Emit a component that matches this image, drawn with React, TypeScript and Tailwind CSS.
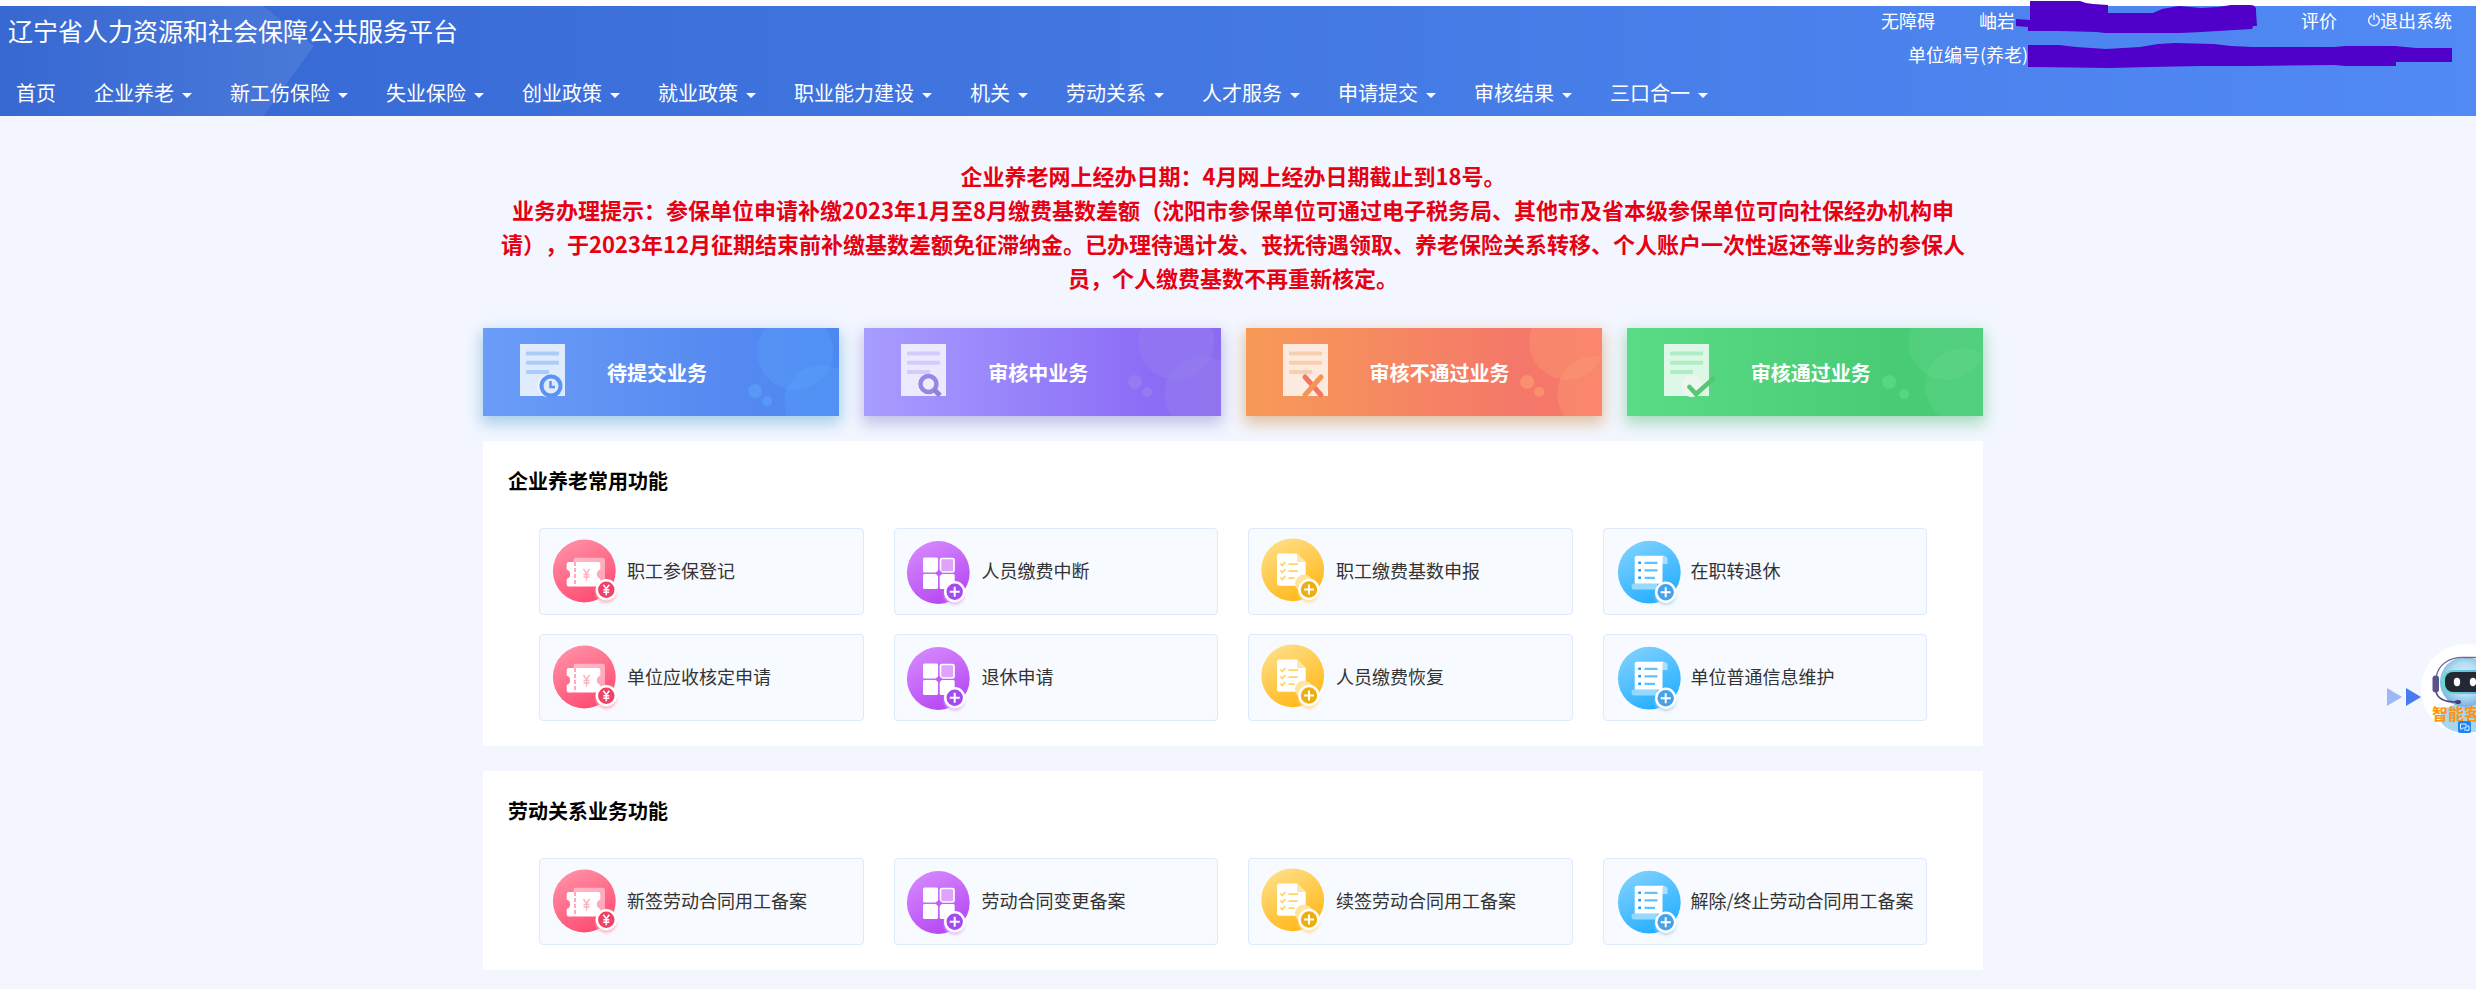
import type { ReactNode } from 'react';

type TileKind = 'ticket' | 'grid' | 'checklist' | 'scroll';
type StatusKind = 'clock' | 'search' | 'reject' | 'pass';

interface Tile {
  label: string;
  kind: TileKind;
}

const NAV_ITEMS = [
  '企业养老',
  '新工伤保险',
  '失业保险',
  '创业政策',
  '就业政策',
  '职业能力建设',
  '机关',
  '劳动关系',
  '人才服务',
  '申请提交',
  '审核结果',
  '三口合一',
];

const STATUS_CARDS = [
  {
    label: '待提交业务',
    kind: 'clock' as StatusKind,
    className: 'bg-linear-to-r from-[#6b9cf8] via-[#5589f0] via-70% to-[#4d88f2] shadow-[0_6px_14px_2px_#a9cfea]',
    line: '#a9cdf8',
    bubble: '#5aa4fa',
    bubbles: [[312, 24, 38], [339, 75, 38], [272, 63, 7], [284, 73, 5]],
  },
  {
    label: '审核中业务',
    kind: 'search' as StatusKind,
    className: 'bg-linear-to-r from-[#a79cff] via-[#8c6cf6] via-80% to-[#8a6cf0] shadow-[0_6px_14px_2px_#c2c0e8]',
    line: '#d3ccfa',
    bubble: '#9a84ee',
    bubbles: [[312, 14, 38], [338, 66, 38], [271, 54, 7], [283, 64, 5]],
  },
  {
    label: '审核不通过业务',
    kind: 'reject' as StatusKind,
    className: 'bg-linear-to-r from-[#f79a57] via-[#f47869] via-75% to-[#f8786c] shadow-[0_6px_14px_2px_#e0c3a6]',
    line: '#f6d0ae',
    bubble: '#fca072',
    bubbles: [[321, 14, 38], [349, 66, 38], [281, 54, 7], [293, 64, 5]],
  },
  {
    label: '审核通过业务',
    kind: 'pass' as StatusKind,
    className: 'bg-linear-to-r from-[#5adc86] via-[#48cb74] via-75% to-[#48cc76] shadow-[0_6px_14px_2px_#a9dcc0]',
    line: '#aeeec4',
    bubble: '#66d890',
    bubbles: [[319, 14, 38], [336, 58, 38], [262, 54, 7], [277, 66, 5]],
  },
];

const PENSION_TILES: Tile[] = [
  { label: '职工参保登记', kind: 'ticket' },
  { label: '人员缴费中断', kind: 'grid' },
  { label: '职工缴费基数申报', kind: 'checklist' },
  { label: '在职转退休', kind: 'scroll' },
  { label: '单位应收核定申请', kind: 'ticket' },
  { label: '退休申请', kind: 'grid' },
  { label: '人员缴费恢复', kind: 'checklist' },
  { label: '单位普通信息维护', kind: 'scroll' },
];

const LABOR_TILES: Tile[] = [
  { label: '新签劳动合同用工备案', kind: 'ticket' },
  { label: '劳动合同变更备案', kind: 'grid' },
  { label: '续签劳动合同用工备案', kind: 'checklist' },
  { label: '解除/终止劳动合同用工备案', kind: 'scroll' },
];

/** Gradients used by all tile icons, defined once for the page */
function IconDefs() {
  return (
    <svg className="absolute size-0" aria-hidden="true">
      <defs>
        <linearGradient id="g-ticket" x1="0.2" y1="0" x2="0.7" y2="1">
          <stop offset="0" stopColor="#ff91a6" />
          <stop offset="1" stopColor="#ff4a70" />
        </linearGradient>
        <linearGradient id="g-grid" x1="0.2" y1="0" x2="0.7" y2="1">
          <stop offset="0" stopColor="#d68aff" />
          <stop offset="1" stopColor="#b545f2" />
        </linearGradient>
        <linearGradient id="g-checklist" x1="0.2" y1="0" x2="0.7" y2="1">
          <stop offset="0" stopColor="#ffdf88" />
          <stop offset="1" stopColor="#ffb716" />
        </linearGradient>
        <linearGradient id="g-scroll" x1="0.2" y1="0" x2="0.7" y2="1">
          <stop offset="0" stopColor="#80d2ff" />
          <stop offset="1" stopColor="#22adff" />
        </linearGradient>
        <filter id="badge-blur" x="-50%" y="-50%" width="200%" height="200%">
          <feGaussianBlur stdDeviation="1.5" />
        </filter>
      </defs>
    </svg>
  );
}

interface BadgeProps {
  x: number;
  y: number;
  fill: string;
  shadow: string;
  yen?: boolean;
}

function Badge({ x, y, fill, shadow, yen }: BadgeProps) {
  return (
    <g transform={`translate(${x} ${y})`}>
      <circle cy="3" r="10" fill={shadow} filter="url(#badge-blur)" />
      <circle r="10.7" fill="#fff" />
      <circle r="8.2" fill={fill} />
      {yen ? (
        <path d="M-3 -5 0 -1 3 -5M0 -1V5.500M-3 0H3M-3 2.500H3" fill="none" stroke="#fff" strokeWidth="1.5" />
      ) : (
        <path d="M-5 0H5M0 -5V5" stroke="#fff" strokeWidth="2" />
      )}
    </g>
  );
}

function TileIcon({ kind }: { kind: TileKind }) {
  const drawings: Record<TileKind, ReactNode> = {
    ticket: (
      <>
        <circle cx="35.3" cy="35" r="31.400" fill="url(#g-ticket)" />
        <rect x="24.500" y="21.800" width="31.500" height="25" rx="2" fill="#fff" opacity="0.450" />
        <path
          d="M19.700 26H49.300a2 2 0 0 1 2 2v5.500a5 5 0 0 0 0 9.500v5.500a2 2 0 0 1-2 2H19.700a2 2 0 0 1-2-2V43a5 5 0 0 0 0-9.500V28a2 2 0 0 1 2-2Z"
          fill="#fff"
        />
        <path d="M26 26V50.500" stroke="#ff8da2" strokeWidth="1.500" strokeDasharray="4 2" />
        <path d="M34.500 33 37.500 37.500 40.500 33M37.500 37.500V44.500M34.500 38.500H40.500M34.500 41H40.500" fill="none" stroke="#ffb0bd" strokeWidth="1.400" />
        <Badge x={57.3} y={53.8} fill="#ee4266" shadow="#ffb0be" yen />
      </>
    ),
    grid: (
      <>
        <circle cx="34.300" cy="36.500" r="31.400" fill="url(#g-grid)" />
        <rect x="19" y="21.500" width="15" height="15" rx="1.500" fill="#fff" />
        <rect x="36.500" y="22.500" width="13.500" height="13.500" rx="1.500" fill="#dea4fb" stroke="#fff" strokeWidth="1.700" />
        <rect x="19" y="38" width="15" height="15" rx="1.500" fill="#fff" />
        <rect x="35.700" y="38" width="15" height="15" rx="1.500" fill="#fff" />
        <path d="M34.900 33.500 38.500 37.200 34.900 41 31.200 37.200Z" fill="#c25cf7" />
        <Badge x={50.7} y={55.8} fill="#a44af0" shadow="#e3bdfb" />
      </>
    ),
    checklist: (
      <>
        <circle cx="34.700" cy="33.800" r="31.400" fill="url(#g-checklist)" />
        <path d="M21 17.500H39L47.700 26V49.800H21a2 2 0 0 1-2-2V19.500a2 2 0 0 1 2-2Z" fill="#fff" />
        <path d="M39 17.500 47.700 26H39Z" fill="#ffe6a6" />
        <circle cx="46" cy="47.500" r="9" fill="#ffe49d" />
        <path
          d="M22.500 27.500 24.200 29.500 27.500 26M22.500 34.500 24.200 36.500 27.500 33M22.500 41.500 24.200 43.500 27.500 40M30.500 28.200H40M30.500 35.200H40M30.500 42.200H36.500"
          fill="none"
          stroke="#ffd466"
          strokeWidth="1.800"
        />
        <Badge x={51} y={53.5} fill="#edae14" shadow="#ffe09a" />
      </>
    ),
    scroll: (
      <>
        <circle cx="36.300" cy="36.200" r="31.400" fill="url(#g-scroll)" />
        <path d="M46 20.300H51.500a3 3 0 0 1 3 3V28H48Z" fill="#a9e0ff" />
        <path d="M23.700 19.800H51.500a2.500 2.500 0 0 0-2 2.500V47.800H21.700V21.800a2 2 0 0 1 2-2Z" fill="#fff" />
        <path d="M18.700 47.800H44V53.500H21a2.300 2.300 0 0 1-2.300-2.300Z" fill="#96d9ff" />
        <path d="M25.200 26.800H28M25.200 34.300H28M25.200 41.800H28" stroke="#1f9ff5" strokeWidth="2.600" />
        <path d="M31.500 26.800H44.500M31.500 34.300H44.500M31.500 41.800H42" stroke="#5fc3ff" strokeWidth="2.200" />
        <Badge x={52.7} y={56.2} fill="#45a2ea" shadow="#b7d8ef" />
      </>
    ),
  };

  return (
    <svg viewBox="0 0 72 72" className="size-[72px] shrink-0" aria-hidden="true">
      {drawings[kind]}
    </svg>
  );
}

function StatusIcon({ kind, line }: { kind: StatusKind; line: string }) {
  return (
    <svg viewBox="0 0 52 56" className="h-14 w-[52px] shrink-0" aria-hidden="true">
      <rect x="1" y="0" width="45" height="52" fill="#fff" opacity="0.800" />
      <rect x="7" y="7.500" width="33" height="4" rx="1" fill={line} />
      <rect x="7" y="16.800" width="33" height="4" rx="1" fill={line} />
      <rect x="7" y="26" width="23" height="4" rx="1" fill={line} />
      {kind === 'clock' && (
        <>
          <circle cx="29" cy="42" r="11" fill="#f0f2f6" />
          <circle cx="32" cy="42" r="9.500" fill="#dfeafc" stroke="#5b93f5" strokeWidth="4" />
          <path d="M31.500 37V43H36" fill="none" stroke="#5b93f5" strokeWidth="2.500" />
        </>
      )}
      {kind === 'search' && (
        <>
          <circle cx="27" cy="42" r="9" fill="#f3f1fb" />
          <circle cx="28.500" cy="40" r="8" fill="#efeafd" stroke="#9488e4" strokeWidth="4.500" />
          <path d="M34 45.500 40 51.500" stroke="#8d80dc" strokeWidth="5" />
        </>
      )}
      {kind === 'reject' && (
        <>
          <circle cx="27" cy="42" r="9" fill="#fbeee9" />
          <path d="M23 33 39 51" stroke="#f5765e" strokeWidth="5" strokeLinecap="round" />
          <path d="M39 33 23 51" stroke="#f69455" strokeWidth="5" strokeLinecap="round" />
        </>
      )}
      {kind === 'pass' && (
        <>
          <circle cx="29" cy="42" r="11" fill="#ecf6ef" />
          <path d="M26.500 43 33 50 50 35" fill="none" stroke="#56c673" strokeWidth="4.500" strokeLinecap="round" />
        </>
      )}
    </svg>
  );
}

function Header() {
  return (
    <header className="relative mt-[6px] bg-linear-to-r from-[#3567d1] to-[#528af5] pb-[2px] text-white">
      <svg
        viewBox="0 0 314 110"
        preserveAspectRatio="none"
        className="absolute inset-y-0 left-0 h-full w-[314px]"
        aria-hidden="true"
      >
        <defs>
          <linearGradient id="g-facet" x1="0" y1="0" x2="1" y2="0">
            <stop offset="0" stopColor="#fff" stopOpacity="0.010" />
            <stop offset="1" stopColor="#fff" stopOpacity="0.090" />
          </linearGradient>
        </defs>
        <path d="M0 0H263L314 40 263 110H0Z" fill="url(#g-facet)" />
      </svg>

      <div className="relative flex items-start justify-between pr-6 pl-2">
        <h1 className="pt-[6px] text-[25px] leading-9">辽宁省人力资源和社会保障公共服务平台</h1>

        <div className="flex flex-col items-end gap-[6px] text-[18px] leading-7">
          <div className="flex items-center">
            <a href="#accessible">无障碍</a>
            <span className="ml-11 w-[278px]">岫岩</span>
            <a href="#rate" className="ml-11">评价</a>
            <button type="button" className="ml-[31px] flex items-center">
              <svg viewBox="0 0 12 16" className="h-4 w-3" fill="none" stroke="currentColor" strokeWidth="1.500" opacity="0.850">
                <path d="M4 3.500a5.300 5.300 0 1 0 4 0M6 1V8" />
              </svg>
              退出系统
            </button>
          </div>
          <div className="w-[544px]">单位编号(养老)</div>
        </div>

        {/* Hand-drawn cover over the account details */}
        <svg viewBox="2010 0 446 72" className="absolute -top-[6px] right-5 h-[72px] w-[446px]" fill="#5000c8" aria-hidden="true">
          <path d="M2030 1 2080 1 2086 3 2093 4 2108 5V13H2153L2162 9 2179 6 2201 8 2218 7 2231 5H2250Q2257 5 2256 12L2257 26H2253L2252 29 2201 32 2180 33H2105L2097 32 2059 31H2028V27L2016 26V19L2030 20Z" />
          <path d="M2028 45H2059L2076 47 2106 49 2140 47 2158 44 2175 43 2214 44 2231 46 2253 47H2334L2345 46H2395L2416 48H2452V62H2396V66H2345L2334 65 2253 66 2201 66 2150 67 2110 68 2028 67Z" />
        </svg>
      </div>

      <nav className="relative mt-1 flex h-[42px] items-center gap-[38px] pl-4 text-[20px] whitespace-nowrap">
        <a href="#home">首页</a>
        {NAV_ITEMS.map((item) => (
          <button key={item} type="button" className="flex items-center gap-2">
            {item}
            <span className="mt-1 border-x-5 border-t-5 border-x-transparent border-t-white" />
          </button>
        ))}
      </nav>
    </header>
  );
}

function Panel({ title, tiles }: { title: string; tiles: Tile[] }) {
  return (
    <section className="mt-[25px] bg-white py-[25px]">
      <h2 className="px-[25px] text-[20px] leading-[30px] font-bold text-black">{title}</h2>
      <div className="mt-8 grid grid-cols-4 gap-x-[30px] gap-y-[19px] px-14">
        {tiles.map((tile) => (
          <a
            key={tile.label}
            href="#service"
            className="flex h-[87px] items-center gap-[6px] rounded border border-[#dde9fd] bg-[#f7faff] pl-[9px] text-[18px] whitespace-nowrap text-[#333]"
          >
            <TileIcon kind={tile.kind} />
            <span className="pb-[2px]">{tile.label}</span>
          </a>
        ))}
      </div>
    </section>
  );
}

/** Floating customer service robot at the right edge */
function ServiceRobot() {
  return (
    <button
      type="button"
      aria-label="智能客服"
      className="absolute top-[640px] right-0 h-[96px] w-[92px] overflow-hidden"
    >
      <svg viewBox="0 0 92 96" className="absolute inset-0 h-[96px] w-[92px]" aria-hidden="true">
        <defs>
          <radialGradient id="g-head" cx="0.5" cy="0.45" r="0.55">
            <stop offset="0" stopColor="#e4f4fd" />
            <stop offset="0.600" stopColor="#b4dcf3" />
            <stop offset="1" stopColor="#78b0de" />
          </radialGradient>
          <linearGradient id="g-visor" x1="0" y1="0" x2="1" y2="0">
            <stop offset="0" stopColor="#5fe0cc" />
            <stop offset="1" stopColor="#63a8f5" />
          </linearGradient>
        </defs>
        <path d="M3 48V66L18 57Z" fill="#9db8f6" />
        <path d="M22 48V66L37 57Z" fill="#4a7bee" />
        <circle cx="82" cy="49" r="45" fill="#fff" />
        <ellipse cx="82" cy="78" rx="26" ry="15" fill="#a5d6f4" />
        <circle cx="81" cy="42" r="25" fill="url(#g-head)" />
        <path d="M52 38C54 24 66 17 80 17.500H92" fill="none" stroke="#6d6a98" strokeWidth="1.300" />
        <rect x="58" y="30" width="48" height="24" rx="11" fill="url(#g-visor)" />
        <rect x="61" y="32" width="44" height="20" rx="8" fill="#232833" />
        <ellipse cx="73" cy="42" rx="3.200" ry="4.200" fill="#fff" />
        <ellipse cx="89" cy="42" rx="3.200" ry="4.200" fill="#fff" />
        <rect x="48.500" y="35.500" width="6.500" height="17" rx="3" fill="#5a538c" />
        <path d="M52 52C54 59 60 62 72 62" fill="none" stroke="#4d4785" strokeWidth="1.500" />
        <ellipse cx="74" cy="62" rx="3" ry="2" fill="#453f80" />
      </svg>
      <span className="absolute top-[61px] left-12 text-[16px] leading-6 font-bold whitespace-nowrap text-[#ff930f]">
        智能客服
      </span>
      <svg viewBox="0 0 13 12" className="absolute top-[81px] left-[74px] h-3 w-[13px]" aria-hidden="true">
        <rect width="13" height="12" rx="2" fill="#1b86f3" />
        <path d="M2.500 3H8V7H4.500L3 8.500V7H2.500ZM9 5H11V9H10V10L9 9H6" fill="none" stroke="#fff" strokeWidth="0.900" />
      </svg>
    </button>
  );
}

export default function App() {
  return (
    <div className="flow-root bg-white font-['Noto_Sans_CJK_SC','Liberation_Sans',sans-serif]">
      <IconDefs />
      <Header />

      <div className="min-h-[873px] bg-[#f3f6ff] pt-[42px] pr-[10px] pb-[19px]">
        <main className="mx-auto max-w-[1500px]">
          {/* Notice */}
          <div className="px-[14px] text-center text-[22px] leading-[34px] font-bold text-[#e60012] [text-spacing-trim:space-all]">
            <p>企业养老网上经办日期：4月网上经办日期截止到18号。</p>
            <p>
              业务办理提示：参保单位申请补缴2023年1月至8月缴费基数差额（沈阳市参保单位可通过电子税务局、其他市及省本级参保单位可向社保经办机构申请），于2023年12月征期结束前补缴基数差额免征滞纳金。已办理待遇计发、丧抚待遇领取、养老保险关系转移、个人账户一次性返还等业务的参保人员，个人缴费基数不再重新核定。
            </p>
          </div>

          {/* Status cards */}
          <div className="mt-[34px] grid grid-cols-4 gap-[25px]">
            {STATUS_CARDS.map((card) => (
              <button
                key={card.label}
                type="button"
                className={`relative flex h-[88px] items-center gap-9 pl-9 text-[20px] font-bold text-white ${card.className}`}
              >
                <svg
                  viewBox="0 0 356 88"
                  preserveAspectRatio="xMaxYMid slice"
                  className="absolute inset-0 h-full w-full"
                  fill={card.bubble}
                  aria-hidden="true"
                >
                  {card.bubbles.map(([cx, cy, r]) => (
                    <circle key={cx} cx={cx} cy={cy} r={r} opacity={r > 10 ? 0.35 : 0.6} />
                  ))}
                </svg>
                <StatusIcon kind={card.kind} line={card.line} />
                <span className="relative pt-[2px]">{card.label}</span>
              </button>
            ))}
          </div>

          <Panel title="企业养老常用功能" tiles={PENSION_TILES} />
          <Panel title="劳动关系业务功能" tiles={LABOR_TILES} />
        </main>
      </div>

      <ServiceRobot />
    </div>
  );
}
